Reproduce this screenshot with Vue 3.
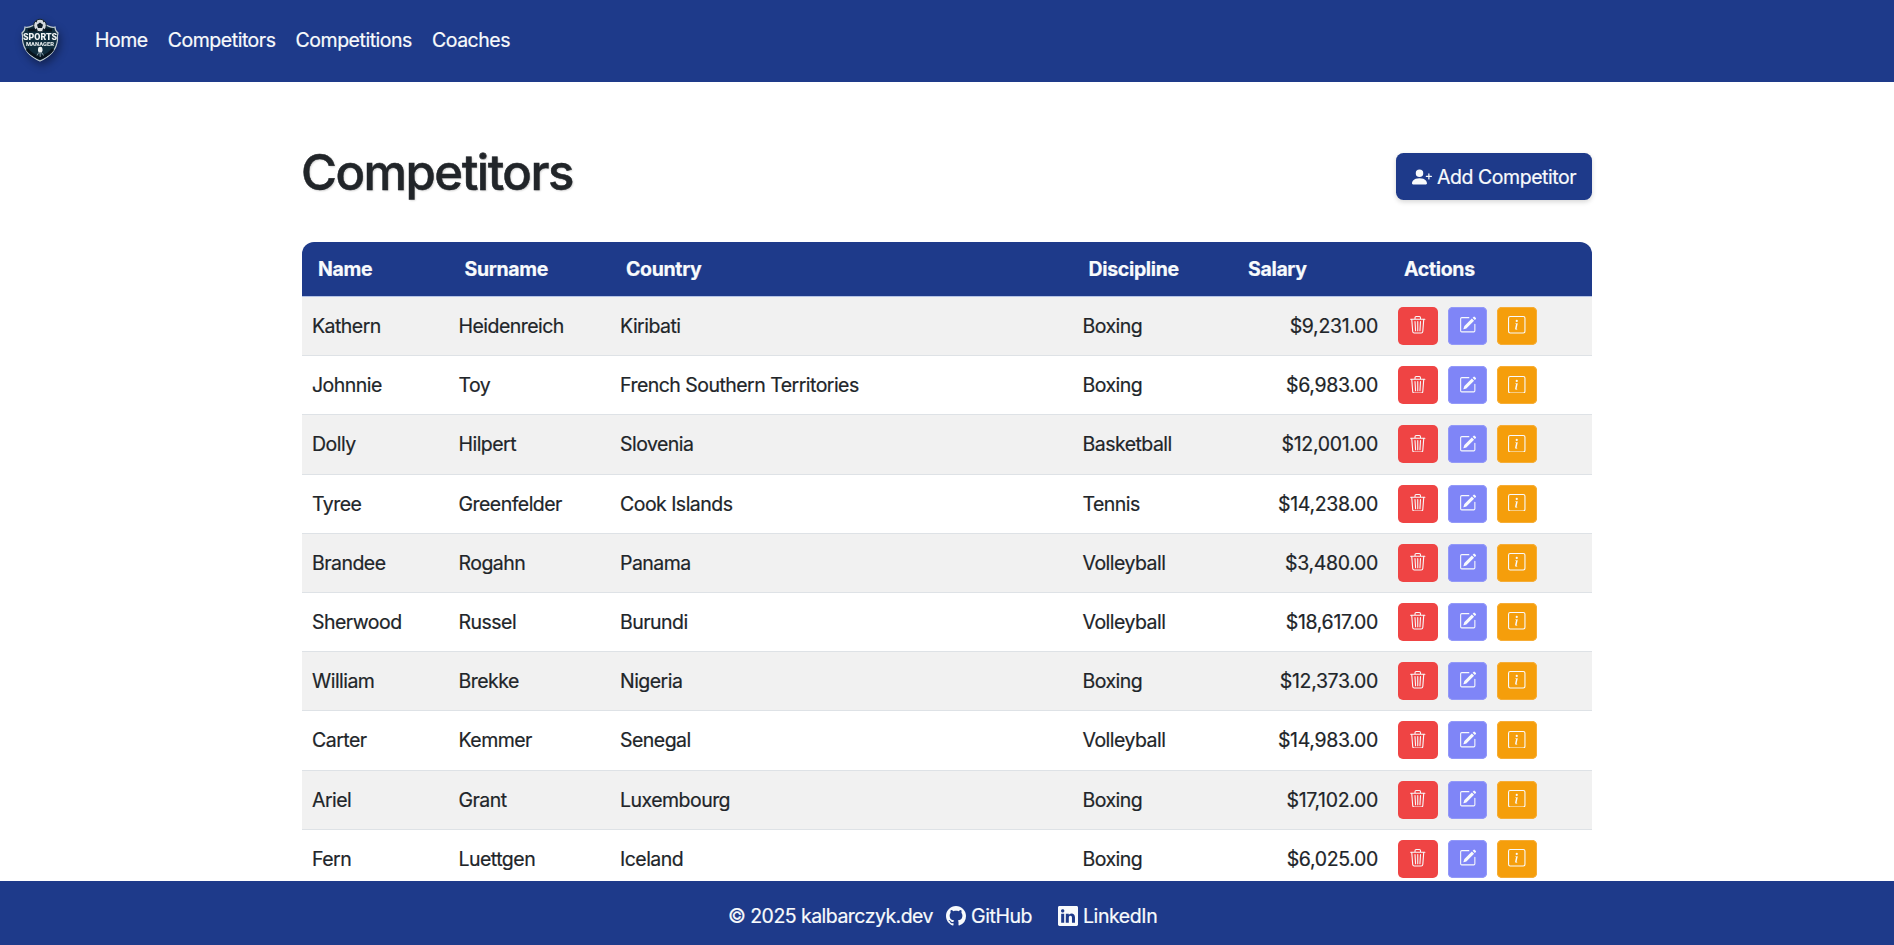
<script setup>
const links = ['Home', 'Competitors', 'Competitions', 'Coaches']
const columns = ['Name', 'Surname', 'Country', 'Discipline', 'Salary', 'Actions']
const rows = [
  ['Kathern', 'Heidenreich', 'Kiribati', 'Boxing', '$9,231.00'],
  ['Johnnie', 'Toy', 'French Southern Territories', 'Boxing', '$6,983.00'],
  ['Dolly', 'Hilpert', 'Slovenia', 'Basketball', '$12,001.00'],
  ['Tyree', 'Greenfelder', 'Cook Islands', 'Tennis', '$14,238.00'],
  ['Brandee', 'Rogahn', 'Panama', 'Volleyball', '$3,480.00'],
  ['Sherwood', 'Russel', 'Burundi', 'Volleyball', '$18,617.00'],
  ['William', 'Brekke', 'Nigeria', 'Boxing', '$12,373.00'],
  ['Carter', 'Kemmer', 'Senegal', 'Volleyball', '$14,983.00'],
  ['Ariel', 'Grant', 'Luxembourg', 'Boxing', '$17,102.00'],
  ['Fern', 'Luettgen', 'Iceland', 'Boxing', '$6,025.00'],
]
</script>

<template>
  <div class="page">
    <header class="navbar">
      <svg class="logo" viewBox="0 0 38 44">
        <path d="M19 5 L26 7.5 Q31 10 34 9 Q34 13 37 15 Q36 18 36.500 22 Q35 36 19 43 Q3 36 1.500 22 Q2 18 1 15 Q4 13 4 9 Q7 10 12 7.500Z" fill="#102d3d" stroke="#c3ced2" stroke-width="1.200" />
        <path d="M7 12 L31 12 M6 31 Q10 37 19 40 Q28 37 32 31" fill="none" stroke="#07131d" stroke-width="3" />
        <circle cx="19" cy="7.500" r="6.300" fill="#d5dadd" stroke="#15242e" stroke-width="1" />
        <path d="M19 4.500 L22 6.700 L21 10 H17 L16 6.700Z M14 3.500 L16.500 2 L15.500 4.500Z M24 3.500 L21.500 2 L22.500 4.500Z M14 12 L15.500 10 L17 13Z M24 12 L22.500 10 L21 13Z" fill="#0b1b26" />
        <text x="19" y="21.700" class="logo-title" textLength="34" lengthAdjust="spacingAndGlyphs">SPORTS</text>
        <text x="19" y="27.700" class="logo-sub" textLength="28" lengthAdjust="spacingAndGlyphs">MANAGER</text>
        <rect x="17" y="28.800" width="4.500" height="6" rx="2.200" fill="#eef2f3" />
        <path d="M16 37.500 L17.500 34.800 H21 L22.500 37.500 M19.200 34 V39" stroke="#83969f" stroke-width="1" fill="none" />
      </svg>
      <nav>
        <a v-for="link in links" :key="link">{{ link }}</a>
      </nav>
    </header>

    <main>
      <div class="heading">
        <h1>Competitors</h1>
        <button class="add">
          <svg viewBox="0 0 16 16" fill="currentColor">
            <path d="M1 14s-1 0-1-1 1-4 6-4 6 3 6 4-1 1-1 1zm5-6a3 3 0 1 0 0-6 3 3 0 0 0 0 6" />
            <path fill-rule="evenodd" d="M13.500 5a.5.5 0 0 1 .5.5V7h1.500a.5.5 0 0 1 0 1H14v1.500a.5.5 0 0 1-1 0V8h-1.500a.5.5 0 0 1 0-1H13V5.500a.5.5 0 0 1 .5-.5" />
          </svg>
          <span>Add Competitor</span>
        </button>
      </div>

      <div class="table">
        <div class="row head">
          <div v-for="c in columns" :key="c">{{ c }}</div>
        </div>
        <div v-for="row in rows" :key="row[0]" class="row body">
          <div v-for="(cell, i) in row" :key="i" :class="{ salary: i === 4 }">{{ cell }}</div>
          <div class="actions">
            <button class="delete">
              <svg viewBox="0 0 16 16" fill="currentColor">
                <path d="M6.500 1h3a.5.5 0 0 1 .5.5v1H6v-1a.5.5 0 0 1 .5-.5M11 2.500v-1A1.500 1.500 0 0 0 9.500 0h-3A1.500 1.500 0 0 0 5 1.500v1H1.500a.5.5 0 0 0 0 1h.538l.853 10.660A2 2 0 0 0 4.885 16h6.230a2 2 0 0 0 1.994-1.840l.853-10.660h.538a.5.5 0 0 0 0-1zm1.958 1-.846 10.580a1 1 0 0 1-.997.920h-6.230a1 1 0 0 1-.997-.920L3.042 3.500zm-7.487 1a.5.5 0 0 1 .528.470l.5 8.500a.5.5 0 0 1-.998.060L5 5.030a.5.5 0 0 1 .470-.530zm5.058 0a.5.5 0 0 1 .470.530l-.5 8.500a.5.5 0 1 1-.998-.060l.5-8.500a.5.5 0 0 1 .528-.470M8 4.500a.5.5 0 0 1 .5.5v8.500a.5.5 0 0 1-1 0V5a.5.5 0 0 1 .5-.5" />
              </svg>
            </button>
            <button class="edit">
              <svg viewBox="0 0 16 16" fill="currentColor">
                <path d="M15.502 1.940a.5.5 0 0 1 0 .706L14.459 3.690l-2-2L13.502.646a.5.5 0 0 1 .707 0l1.293 1.293zm-1.750 2.456-2-2L4.939 9.210a.5.5 0 0 0-.121.196l-.805 2.414a.25.25 0 0 0 .316.316l2.414-.805a.5.5 0 0 0 .196-.120l6.813-6.814z" />
                <path fill-rule="evenodd" d="M1 13.500A1.500 1.500 0 0 0 2.500 15h11a1.500 1.500 0 0 0 1.500-1.500v-6a.5.5 0 0 0-1 0v6a.5.5 0 0 1-.5.5h-11a.5.5 0 0 1-.5-.5v-11a.5.5 0 0 1 .5-.5H9a.5.5 0 0 0 0-1H2.500A1.500 1.500 0 0 0 1 2.500z" />
              </svg>
            </button>
            <button class="info">
              <svg viewBox="0 0 16 16" fill="currentColor">
                <path d="M14 1a1 1 0 0 1 1 1v12a1 1 0 0 1-1 1H2a1 1 0 0 1-1-1V2a1 1 0 0 1 1-1zM2 0a2 2 0 0 0-2 2v12a2 2 0 0 0 2 2h12a2 2 0 0 0 2-2V2a2 2 0 0 0-2-2z" />
                <path d="m8.930 6.588-2.290.287-.082.380.450.083c.294.070.352.176.288.469l-.738 3.468c-.194.897.105 1.319.808 1.319.545 0 1.178-.252 1.465-.598l.088-.416c-.2.176-.492.246-.686.246-.275 0-.375-.193-.304-.533zM9 4.500a1 1 0 1 1-2 0 1 1 0 0 1 2 0" />
              </svg>
            </button>
          </div>
        </div>
      </div>
    </main>

    <footer>
      <span class="copy">© 2025 kalbarczyk.dev</span>
      <a class="github">
        <svg viewBox="0 0 16 16" fill="currentColor">
          <path d="M8 0C3.580 0 0 3.580 0 8c0 3.540 2.290 6.530 5.470 7.590.4.070.550-.170.550-.380 0-.190-.010-.820-.010-1.490-2.010.370-2.530-.490-2.690-.940-.090-.230-.480-.940-.820-1.130-.280-.150-.680-.520-.010-.530.630-.010 1.080.580 1.230.820.720 1.210 1.870.870 2.330.660.070-.520.280-.870.510-1.070-1.780-.2-3.640-.890-3.640-3.950 0-.870.310-1.590.820-2.150-.080-.2-.360-1.020.080-2.120 0 0 .670-.210 2.200.820.640-.180 1.320-.270 2-.270s1.360.090 2 .270c1.530-1.040 2.200-.820 2.200-.820.440 1.100.160 1.920.080 2.120.510.560.820 1.270.820 2.150 0 3.070-1.870 3.750-3.650 3.950.290.250.540.730.540 1.480 0 1.070-.010 1.930-.010 2.200 0 .210.150.460.550.380A8.010 8.010 0 0 0 16 8c0-4.420-3.580-8-8-8" />
        </svg>
        <span>GitHub</span>
      </a>
      <a class="linkedin">
        <svg viewBox="0 0 16 16" fill="currentColor">
          <path d="M0 1.146C0 .513.526 0 1.175 0h13.650C15.474 0 16 .513 16 1.146v13.708c0 .633-.526 1.146-1.175 1.146H1.175C.526 16 0 15.487 0 14.854zm4.943 12.248V6.169H2.542v7.225zm-1.200-8.212c.837 0 1.358-.554 1.358-1.248-.015-.709-.520-1.248-1.342-1.248S2.400 3.226 2.400 3.934c0 .694.521 1.248 1.327 1.248zm4.908 8.212V9.359c0-.216.016-.432.080-.586.173-.431.568-.878 1.232-.878.869 0 1.216.662 1.216 1.634v3.865h2.401V9.250c0-2.220-1.184-3.252-2.764-3.252-1.274 0-1.845.7-2.165 1.193v.025h-.016l.016-.025V6.169h-2.400c.030.678 0 7.225 0 7.225z" />
        </svg>
        <span>LinkedIn</span>
      </a>
    </footer>
  </div>
</template>

<style>
body { margin: 0; overflow: hidden; }
</style>

<style scoped>
.page {
  height: 945px;
  display: flex;
  flex-direction: column;
  overflow: hidden;
  background: #fff;
  color: #212529;
  font: 400 19.5px/30px Inter, "Liberation Sans", sans-serif;
  letter-spacing: -0.53px;
  -webkit-text-stroke: 0.2px currentColor;
}
.navbar {
  flex: none;
  height: 82px;
  box-sizing: border-box;
  padding: 0 20px 2px 21px;
  display: flex;
  align-items: center;
  background: #1e3a8a;
  color: #f8fafc;
}
.logo {
  width: 38px;
  height: 44px;
  margin-right: 36px;
  overflow: visible;
  -webkit-text-stroke: 0;
  filter: drop-shadow(2px 4px 4px rgba(0, 0, 0, 0.4));
}
.logo-title { font: 900 9.5px Roboto, sans-serif; fill: #f1f4f5; text-anchor: middle; letter-spacing: 0; }
.logo-sub { font: 900 6px Roboto, sans-serif; fill: #dfe6e8; text-anchor: middle; letter-spacing: 0; }
nav { display: flex; gap: 20px; }
nav a { letter-spacing: -0.47px; }
main {
  flex: 1;
  min-height: 0;
  width: 1290px;
  margin: 0 auto;
  overflow: hidden;
  padding: 0 20px;
}
.heading {
  height: 160px;
  box-sizing: border-box;
  padding-top: 61px;
  display: flex;
  justify-content: space-between;
  align-items: flex-start;
}
h1 {
  margin: 0 0 0 -1px;
  font-size: 49px;
  line-height: 60px;
  font-weight: 500;
  letter-spacing: -1.5px;
  -webkit-text-stroke: 0.5px currentColor;
  text-shadow: 1px 1px 2px rgba(0, 0, 0, 0.2);
}
button {
  font: inherit;
  letter-spacing: inherit;
  border: 0;
  padding: 0;
  display: flex;
  align-items: center;
  color: #f8fafc;
}
.add {
  margin-top: 10px;
  width: 196px;
  height: 47px;
  padding-left: 16px;
  gap: 5px;
  border-radius: 7.5px;
  background: #1e3a8a;
  box-shadow: 0 2px 5px rgba(0, 0, 0, 0.16);
  white-space: nowrap;
  letter-spacing: -0.45px;
}
.add svg { width: 20px; height: 20px; flex: none; }
.table { border-radius: 12px 12px 0 0; overflow: hidden; }
.row {
  display: grid;
  grid-template-columns: 146.5px 161.5px 462.5px 159.5px 156px 1fr;
  align-items: center;
  box-sizing: border-box;
}
.head {
  height: 55px;
  background: #1e3a8a;
  color: #f8fafc;
  font-weight: 700;
  letter-spacing: -0.33px;
  border-bottom: 1px solid #b4c3e6;
}
.head > div { padding-left: 16px; }
.body { height: 59.2px; border-bottom: 1px solid #dee2e6; }
.body > div { padding: 0 10px; white-space: nowrap; }
.body:nth-child(even) { background: #f1f1f1; }
.body > .salary { text-align: right; letter-spacing: -0.33px; }
.actions { display: flex; gap: 10px; }
.actions button {
  width: 40px;
  height: 38px;
  border-radius: 5px;
  justify-content: center;
}
.actions svg { width: 17.5px; height: 17.5px; margin-bottom: 2px; }
.actions .delete { background: #ef4444; }
.actions .edit { width: 39px; background: #7f85f7; box-shadow: inset 0 0 0 1px #9399f8; }
.actions .info { background: #f59e0b; box-shadow: inset 0 0 0 1px #f6ad37; }
footer {
  flex: none;
  height: 64px;
  box-sizing: border-box;
  padding: 6px 0 0 728px;
  display: flex;
  align-items: center;
  background: #1e3a8a;
  color: #f8fafc;
  white-space: nowrap;
}
footer a { display: flex; align-items: center; gap: 5px; letter-spacing: -0.42px; }
footer svg { width: 20px; height: 20px; }
.copy { width: 218px; }
.github { width: 112px; }
</style>
